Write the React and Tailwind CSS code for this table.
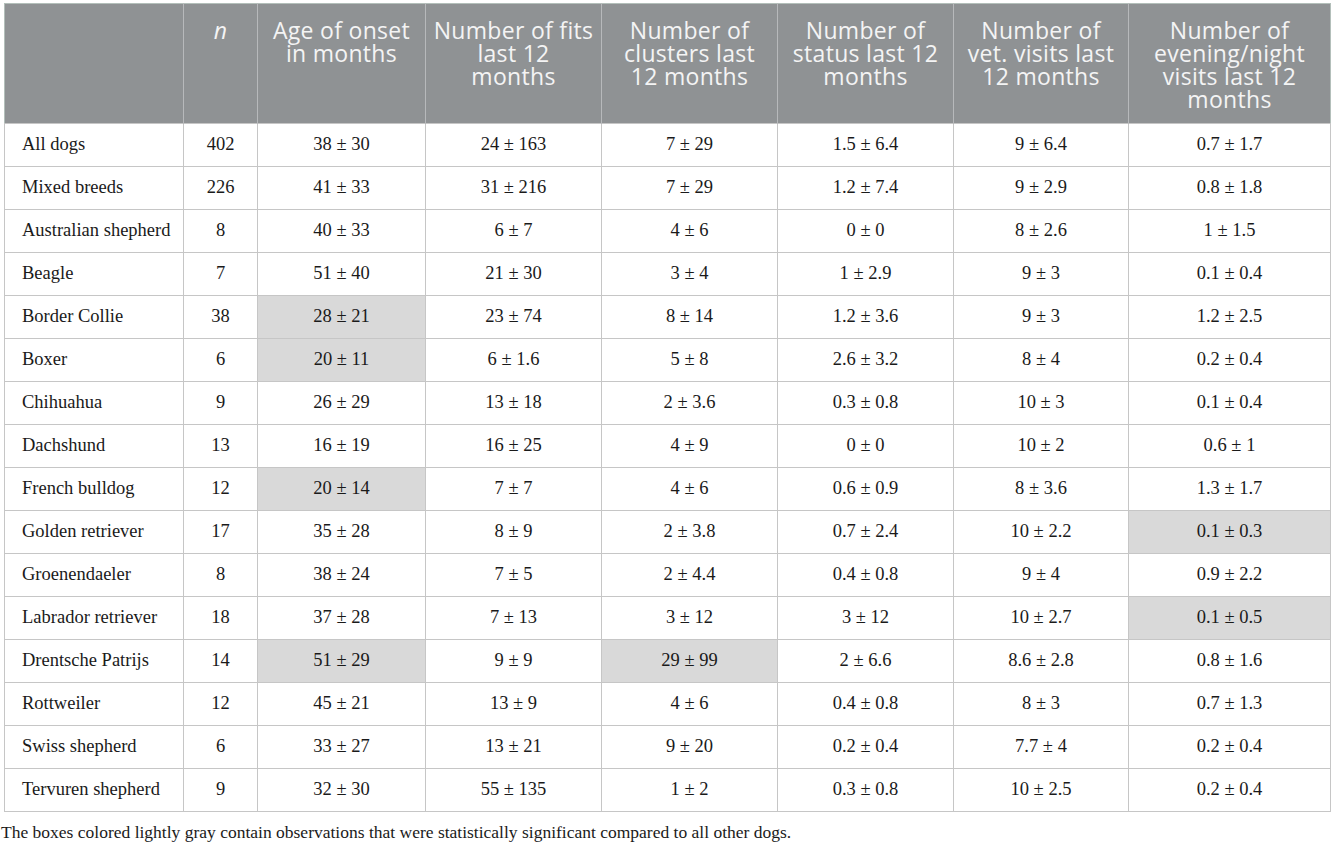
import React from "react";

const headers = [
  "",
  "n",
  "Age of onset\nin months",
  "Number of fits\nlast 12\nmonths",
  "Number of\nclusters last\n12 months",
  "Number of\nstatus last 12\nmonths",
  "Number of\nvet. visits last\n12 months",
  "Number of\nevening/night\nvisits last 12\nmonths",
];

const widths = ["w-[179px]", "w-[74px]", "w-[168px]", "w-[176px]", "w-[176px]", "w-[176px]", "w-[175px]", "w-[202px]"];

const rows = [
  ["All dogs", "402", "38 ± 30", "24 ± 163", "7 ± 29", "1.5 ± 6.4", "9 ± 6.4", "0.7 ± 1.7"],
  ["Mixed breeds", "226", "41 ± 33", "31 ± 216", "7 ± 29", "1.2 ± 7.4", "9 ± 2.9", "0.8 ± 1.8"],
  ["Australian shepherd", "8", "40 ± 33", "6 ± 7", "4 ± 6", "0 ± 0", "8 ± 2.6", "1 ± 1.5"],
  ["Beagle", "7", "51 ± 40", "21 ± 30", "3 ± 4", "1 ± 2.9", "9 ± 3", "0.1 ± 0.4"],
  ["Border Collie", "38", "28 ± 21", "23 ± 74", "8 ± 14", "1.2 ± 3.6", "9 ± 3", "1.2 ± 2.5"],
  ["Boxer", "6", "20 ± 11", "6 ± 1.6", "5 ± 8", "2.6 ± 3.2", "8 ± 4", "0.2 ± 0.4"],
  ["Chihuahua", "9", "26 ± 29", "13 ± 18", "2 ± 3.6", "0.3 ± 0.8", "10 ± 3", "0.1 ± 0.4"],
  ["Dachshund", "13", "16 ± 19", "16 ± 25", "4 ± 9", "0 ± 0", "10 ± 2", "0.6 ± 1"],
  ["French bulldog", "12", "20 ± 14", "7 ± 7", "4 ± 6", "0.6 ± 0.9", "8 ± 3.6", "1.3 ± 1.7"],
  ["Golden retriever", "17", "35 ± 28", "8 ± 9", "2 ± 3.8", "0.7 ± 2.4", "10 ± 2.2", "0.1 ± 0.3"],
  ["Groenendaeler", "8", "38 ± 24", "7 ± 5", "2 ± 4.4", "0.4 ± 0.8", "9 ± 4", "0.9 ± 2.2"],
  ["Labrador retriever", "18", "37 ± 28", "7 ± 13", "3 ± 12", "3 ± 12", "10 ± 2.7", "0.1 ± 0.5"],
  ["Drentsche Patrijs", "14", "51 ± 29", "9 ± 9", "29 ± 99", "2 ± 6.6", "8.6 ± 2.8", "0.8 ± 1.6"],
  ["Rottweiler", "12", "45 ± 21", "13 ± 9", "4 ± 6", "0.4 ± 0.8", "8 ± 3", "0.7 ± 1.3"],
  ["Swiss shepherd", "6", "33 ± 27", "13 ± 21", "9 ± 20", "0.2 ± 0.4", "7.7 ± 4", "0.2 ± 0.4"],
  ["Tervuren shepherd", "9", "32 ± 30", "55 ± 135", "1 ± 2", "0.3 ± 0.8", "10 ± 2.5", "0.2 ± 0.4"],
];

const highlighted = new Set(["4-2", "5-2", "8-2", "9-7", "11-7", "12-2", "12-4"]);

export default function App() {
  return (
    <div className="w-[1333px] h-[843px] bg-white overflow-hidden">
      <div className="pt-[3px] pl-[4px]">
        <table
          className="table-fixed border-collapse w-[1326px] border border-[#b3bfba]"
          style={{ fontFamily: '"Liberation Serif", serif' }}
        >
          <thead>
            <tr className="bg-[#8f9294]">
              {headers.map((h, i) => (
                <th
                  key={i}
                  className={`${widths[i]} h-[120px] align-top pt-[15px] px-0 text-center font-normal text-[23px] leading-[23px] tracking-[0.3px] text-[#f4f4f4] whitespace-pre-line border-l border-[#b7b9bb] first:border-l-0 ${
                    i === 1 ? "italic" : ""
                  }`}
                  style={{ fontFamily: '"Open Sans", "Noto Sans", sans-serif' }}
                >
                  {h}
                </th>
              ))}
            </tr>
          </thead>
          <tbody>
            {rows.map((r, ri) => (
              <tr key={ri} className="h-[43px]">
                {r.map((c, ci) => (
                  <td
                    key={ci}
                    className={`border border-[#c6c6c6] text-[18.5px] text-[#1a1a1a] p-0 ${
                      ci === 0 ? "text-left pl-[17px] whitespace-nowrap" : "text-center"
                    } ${highlighted.has(`${ri}-${ci}`) ? "bg-[#d9d9d9]" : ""}`}
                  >
                    {c}
                  </td>
                ))}
              </tr>
            ))}
          </tbody>
        </table>
      </div>
      <p
        className="mt-[7px] pl-[1px] text-[17.5px] leading-[26px] text-[#1a1a1a]"
        style={{ fontFamily: '"Liberation Serif", serif' }}
      >
        The boxes colored lightly gray contain observations that were statistically significant compared to all other dogs.
      </p>
    </div>
  );
}
